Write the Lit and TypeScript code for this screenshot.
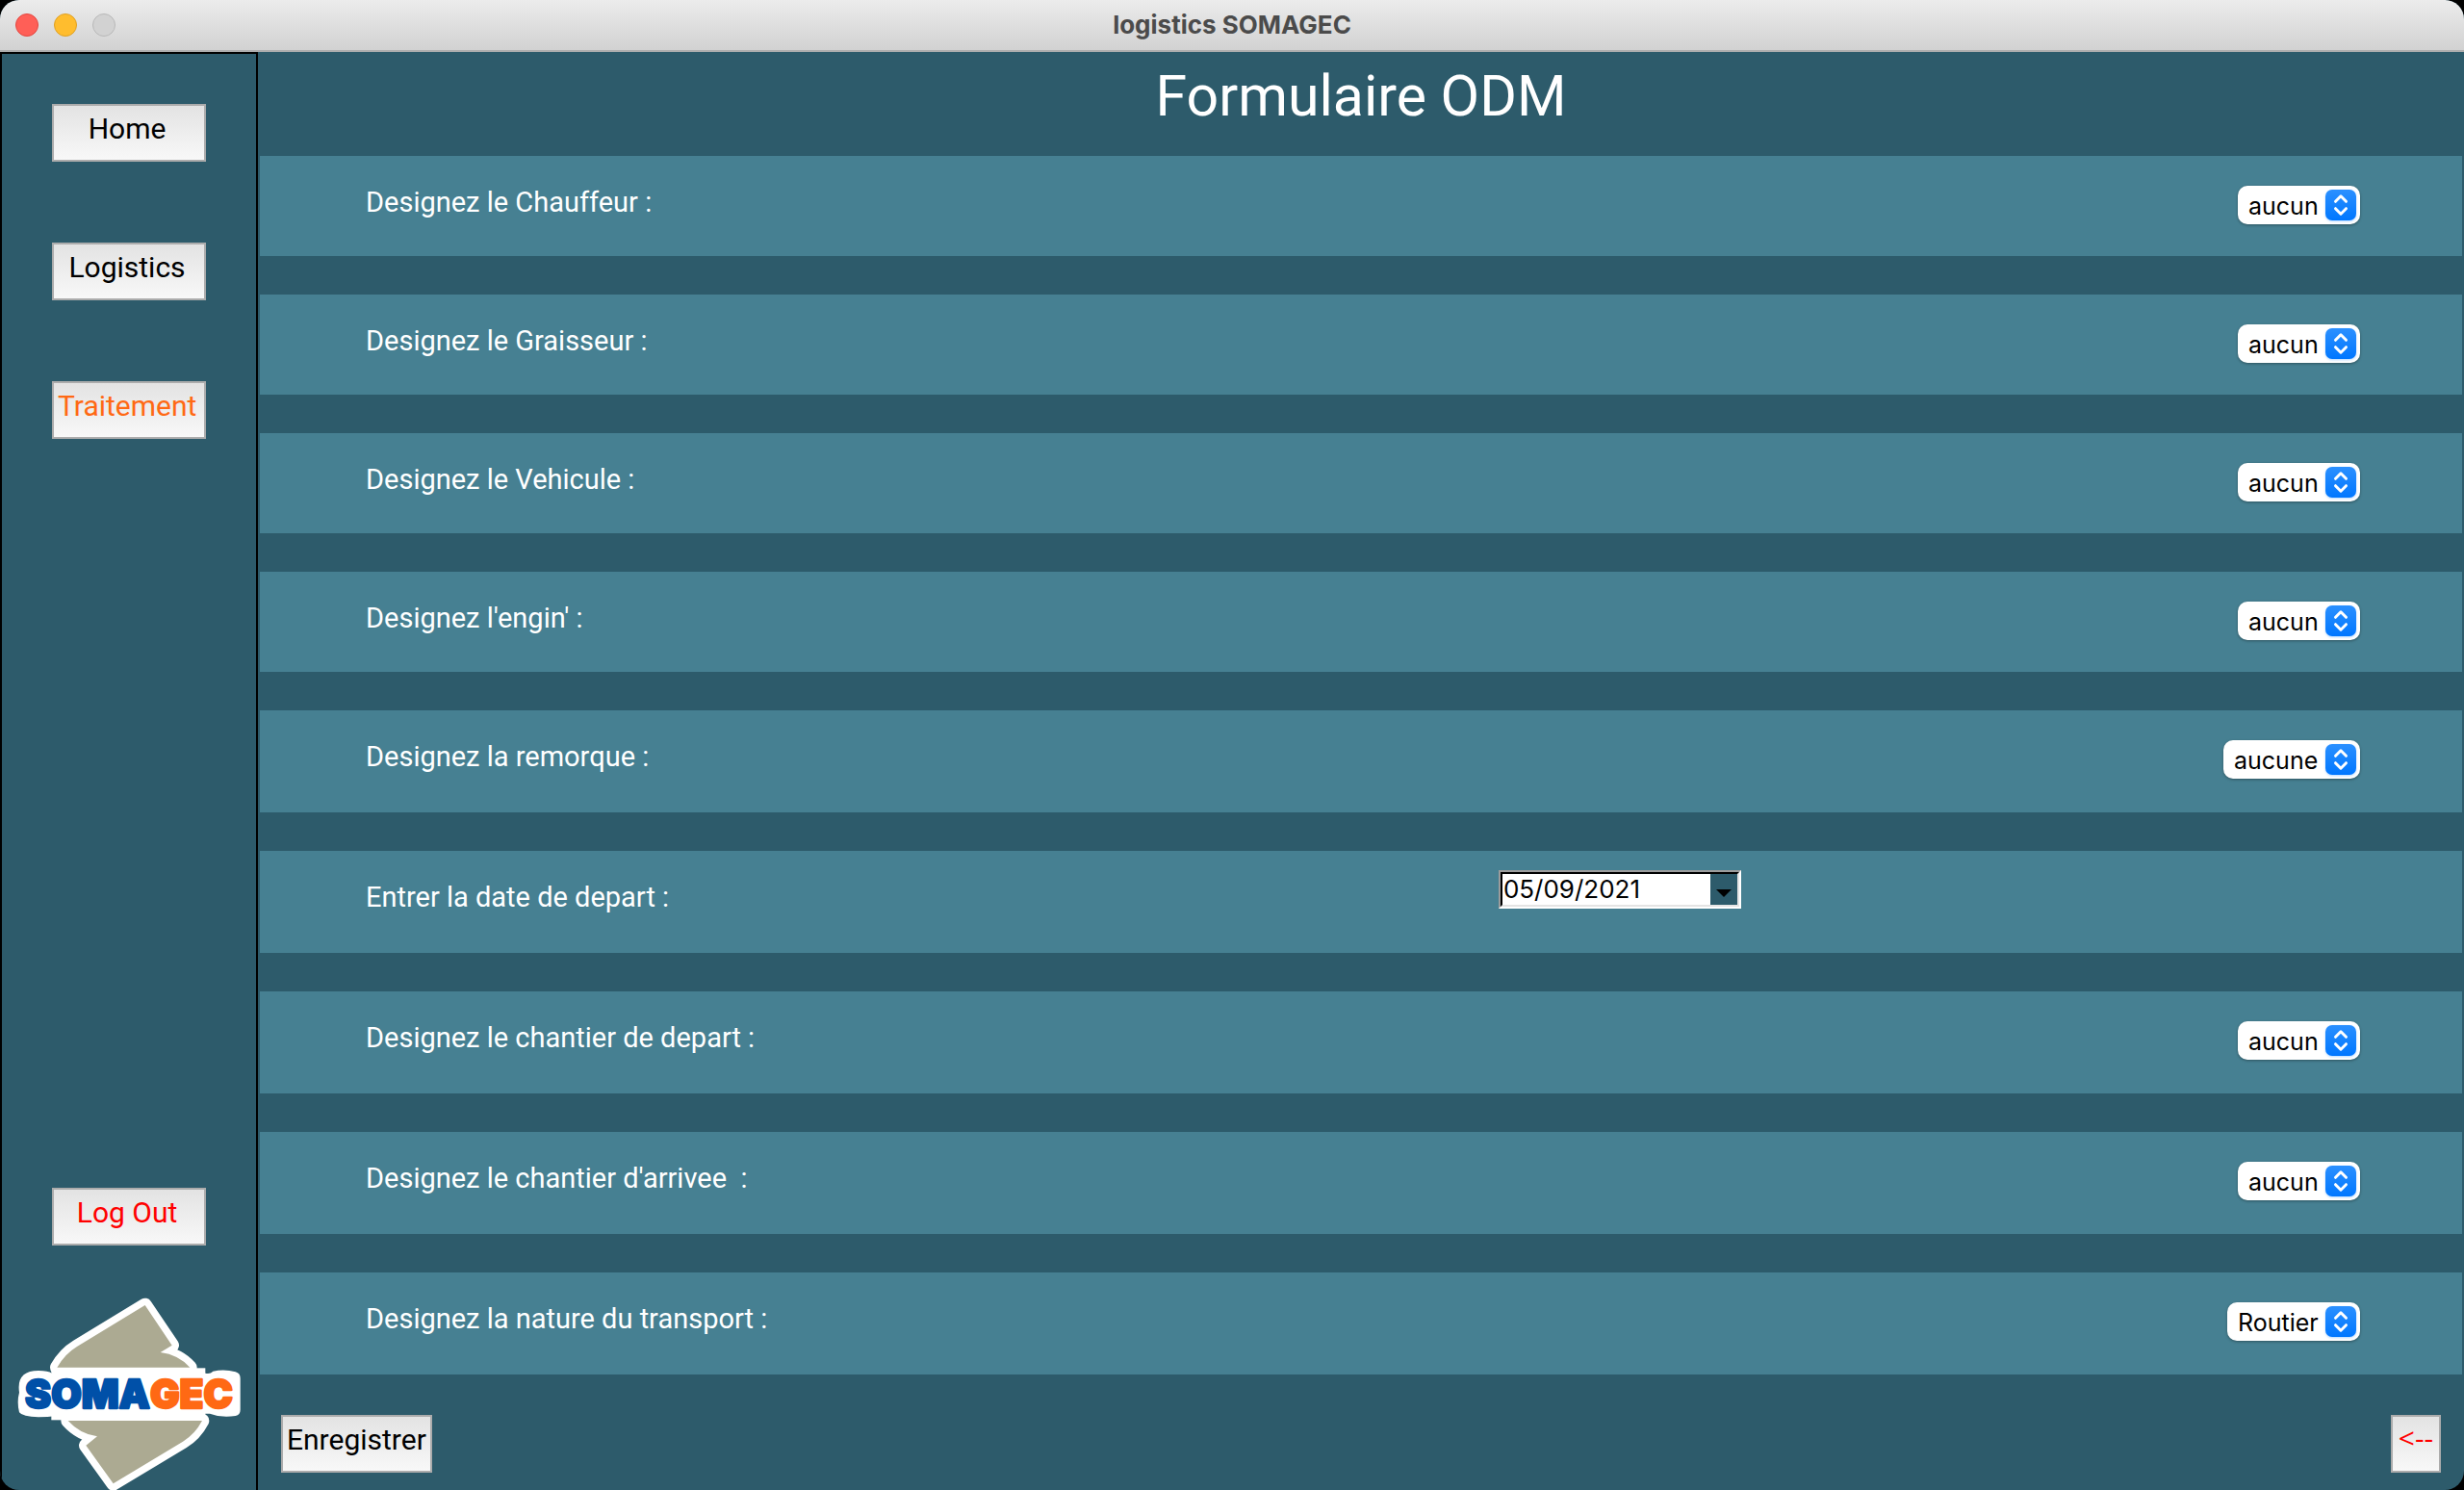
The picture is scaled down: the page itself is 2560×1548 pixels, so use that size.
import { LitElement, html, css, svg } from "lit";
import { customElement } from "lit/decorators.js";

interface Field {
  id: string;
  label: string;
  value: string;
  kind: "select" | "date";
}

const FIELDS: Field[] = [
  { id: "chauffeur", label: "Designez le Chauffeur :", value: "aucun", kind: "select" },
  { id: "graisseur", label: "Designez le Graisseur :", value: "aucun", kind: "select" },
  { id: "vehicule", label: "Designez le Vehicule :", value: "aucun", kind: "select" },
  { id: "engin", label: "Designez l'engin' :", value: "aucun", kind: "select" },
  { id: "remorque", label: "Designez la remorque :", value: "aucune", kind: "select" },
  { id: "date", label: "Entrer la date de depart :", value: "05/09/2021", kind: "date" },
  { id: "depart", label: "Designez le chantier de depart :", value: "aucun", kind: "select" },
  { id: "arrivee", label: "Designez le chantier d'arrivee  :", value: "aucun", kind: "select" },
  { id: "transport", label: "Designez la nature du transport :", value: "Routier", kind: "select" },
];

@customElement("somagec-logo")
export class SomagecLogo extends LitElement {
  static styles = css`
    :host { display: block; }
    .logo { display: block; width: 232px; height: 200px; }
    .sheet { fill: #acaa92; stroke: #fff; stroke-width: 44px; stroke-linejoin: round; paint-order: stroke; }
    .word { font: 900 122px Inter, "Liberation Sans", sans-serif; stroke-linejoin: round; }
    .blue { fill: #0050a8; stroke: #0050a8; stroke-width: 7px; }
    .orange { fill: #ff6914; stroke: #ff6914; stroke-width: 7px; }
  `;

  render() {
    return html`
      <svg class="logo" viewBox="54 54 696 600" role="img" aria-label="SOMAGEC">
        ${svg`
          <path class="sheet" d="M452 78 L536 203 L500 225 Q556 232 592 272 L178 272 Q202 230 240 207 Z"/>
          <path class="sheet" d="M212 438 L630 438 Q608 480 570 503 L353 634 L268 515 L303 487 Q250 480 212 438 Z"/>
          <rect x="160" y="274" width="480" height="162" fill="#fff"/>
          <path d="M120 282 Q150 282 162 290 L640 290 Q655 294 664 284 Q700 276 734 286 Q749 290 749 306 L749 404 Q749 420 734 423 Q690 430 654 416 L200 416 Q180 426 120 427 Q70 426 60 412 Q52 380 60 350 Q50 282 120 282 Z" fill="#fff"/>
          <text class="word" x="402" y="399" text-anchor="middle" aria-hidden="true"><tspan class="blue">SOMA</tspan><tspan class="orange">GEC</tspan></text>
        `}
      </svg>
    `;
  }
}

@customElement("popup-arrows")
export class PopupArrows extends LitElement {
  static styles = css`
    :host { display: block; }
    .arrows { display: block; width: 32px; height: 32px; filter: drop-shadow(0 1px 1px rgba(0, 122, 255, 0.3)); }
  `;

  render() {
    return html`
      <svg class="arrows" viewBox="0 0 32 32" aria-hidden="true">
        <defs>
          <linearGradient id="g" x1="0" y1="0" x2="0" y2="1">
            <stop offset="0" stop-color="#2b90ff" />
            <stop offset="1" stop-color="#0077ff" />
          </linearGradient>
        </defs>
        <rect width="32" height="32" rx="7" fill="url(#g)" />
        <path d="M10.5 12.3 L16 6.8 L21.5 12.3 M10.5 19.7 L16 25.2 L21.5 19.7" fill="none" stroke="#fff" stroke-width="3" stroke-linecap="round" stroke-linejoin="round" />
      </svg>
    `;
  }
}

@customElement("app-root")
export class AppRoot extends LitElement {
  static styles = css`
    :host { display: block; background: #000; font-family: Inter, "Liberation Sans", sans-serif; }
    * { box-sizing: border-box; }
    .window {
      display: grid;
      grid-template-rows: auto 1fr;
      min-height: 100vh;
      border-radius: 20px;
      overflow: hidden;
      background: #2d5b6b;
      color: #fff;
    }
    .titlebar {
      display: grid;
      grid-template-columns: 1fr auto 1fr;
      align-items: center;
      height: 54px;
      padding: 0 16px;
      border-bottom: 2px solid #aeaeae;
      background: linear-gradient(#ececec, #d2d2d2);
    }
    .lights { display: flex; gap: 16px; }
    .light { width: 24px; height: 24px; padding: 0; border: 1px solid #e2463f; border-radius: 50%; background: #ff5f57; }
    .light.minimise { border-color: #dfa023; background: #ffbd2e; }
    .light.zoom { border-color: #b8b8b8; background: #d2d2d2; }
    .caption { font-size: 26px; font-weight: 700; line-height: 32px; color: #4b4b4b; }
    .body { display: grid; grid-template-columns: 268px 1fr; }
    .sidebar {
      display: flex;
      flex-direction: column;
      align-items: center;
      justify-content: space-between;
      padding-top: 52px;
      border: 2px solid #000;
      border-bottom: 0;
    }
    .nav { display: flex; flex-direction: column; gap: 84px; }
    .exit { display: flex; flex-direction: column; align-items: center; gap: 54px; }
    .button {
      height: 60px;
      padding: 0 4px 8px;
      border: 2px solid #acacac;
      background: linear-gradient(#e3e3e3, #f8f8f8);
      color: #000;
      font: 30px/40px Roboto, "Liberation Sans", sans-serif;
    }
    .side { width: 160px; padding-right: 8px; }
    .active { color: #ff6914; }
    .danger { color: #f00; }
    .main { display: flex; flex-direction: column; }
    .heading { margin: 0; height: 108px; padding-top: 10px; text-align: center; font: 59px/72px Roboto, "Liberation Sans", sans-serif; }
    .fields { display: flex; flex-direction: column; gap: 40px; padding: 0 2px; }
    .field {
      display: grid;
      grid-template-columns: 568fr 432fr;
      align-items: start;
      min-height: 104px;
      padding: 31px 106px 0 110px;
      background: #468092;
    }
    .field:nth-child(n + 5) { min-height: 106px; }
    .name { font: 29px/34px Roboto, "Liberation Sans", sans-serif; white-space: pre; }
    .popup { display: grid; align-items: center; justify-items: end; justify-self: end; }
    .list, .mark { grid-area: 1 / 1; }
    .list {
      appearance: none;
      height: 40px;
      margin: 0;
      padding: 2px 43px 0 11px;
      border: 0;
      border-radius: 10px;
      background: #fff;
      color: #000;
      font: 25px/38px Inter, "Liberation Sans", sans-serif;
      box-shadow: 0 1px 3px rgba(0, 0, 0, 0.35);
    }
    .mark { margin-right: 4px; pointer-events: none; }
    .field.dated { padding-top: 20px; }
    .dated .name { padding-top: 11px; }
    .date {
      display: flex;
      width: 252px;
      height: 40px;
      border: 2px solid;
      border-color: #9c9c9c #fff #fff #9c9c9c;
    }
    .inner { display: flex; flex: 1; min-width: 0; border: 2px solid; border-color: #000 #e4e4e4 #e4e4e4 #000; background: #fff; }
    .day { flex: 1; min-width: 0; margin: 0; padding: 0 0 0 1px; border: 0; background: #fff; color: #000; font: 26px/32px Inter, "Liberation Sans", sans-serif; }
    .open { width: 28px; padding: 8px 0 0; border: 0; background: #2d5b6b; }
    .triangle { display: block; width: 16px; height: 8px; margin: 0 auto; }
    .actions { display: flex; justify-content: space-between; padding: 42px 24px 18px; }
    .back { width: 52px; padding-bottom: 12px; font-family: "Open Sans", "Liberation Sans", sans-serif; font-weight: 500; }
  `;

  private control(f: Field) {
    return f.kind === "date"
      ? html`<div class="date"><div class="inner">
          <input class="day" id=${f.id} type="text" .value=${f.value} />
          <button class="open" type="button" aria-label="Calendrier">
            <svg class="triangle" viewBox="0 0 16 8" aria-hidden="true"><path d="M0 0H16L8 8Z" /></svg>
          </button>
        </div></div>`
      : html`<div class="popup">
          <select class="list" id=${f.id}>
            <option selected>${f.value}</option>
          </select>
          <popup-arrows class="mark"></popup-arrows>
        </div>`;
  }

  render() {
    return html`
      <div class="window">
        <header class="titlebar">
          <div class="lights">
            <button class="light" aria-label="Fermer"></button>
            <button class="light minimise" aria-label="Réduire"></button>
            <button class="light zoom" aria-label="Agrandir" disabled></button>
          </div>
          <span class="caption">logistics SOMAGEC</span>
        </header>
        <div class="body">
          <aside class="sidebar">
            <nav class="nav">
              <button class="button side">Home</button>
              <button class="button side">Logistics</button>
              <button class="button side active">Traitement</button>
            </nav>
            <div class="exit">
              <button class="button side danger">Log Out</button>
              <somagec-logo></somagec-logo>
            </div>
          </aside>
          <main class="main">
            <h1 class="heading">Formulaire ODM</h1>
            <div class="fields">
              ${FIELDS.map(
                (f) => html`<div class="field ${f.kind === "date" ? "dated" : ""}">
                  <label class="name" for=${f.id}>${f.label}</label>
                  ${this.control(f)}
                </div>`,
              )}
            </div>
            <div class="actions">
              <button class="button">Enregistrer</button>
              <button class="button back danger">&lt;--</button>
            </div>
          </main>
        </div>
      </div>
    `;
  }
}
